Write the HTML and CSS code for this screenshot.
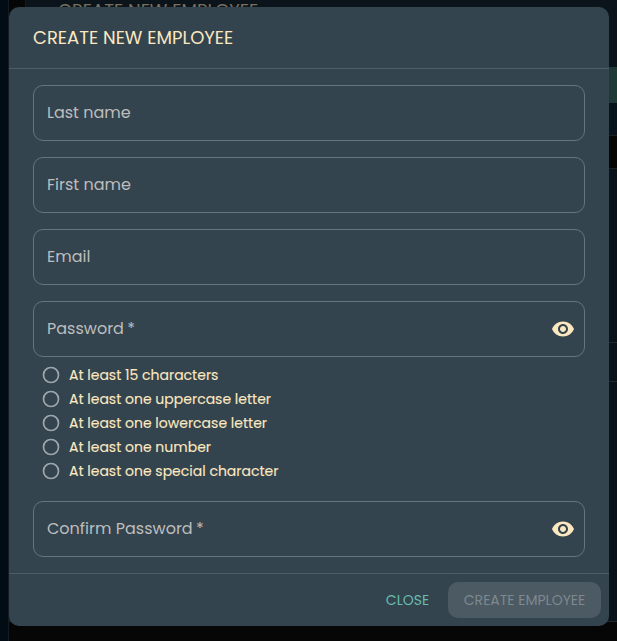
FILE: index.html
```html
<!DOCTYPE html>
<html lang="en">
<head>
<meta charset="utf-8">
<title>Create new employee</title>
<link rel="stylesheet" href="styles.css">
</head>
<body>
<div class="backdrop" aria-hidden="true">
  <div class="rail"></div>
  <div class="page">
    <div class="toolbar"><div class="gutter"></div><div class="heading title-text">CREATE NEW EMPLOYEE</div></div>
    <div class="actions"></div>
    <div class="spacer"></div>
    <div class="table-head"></div>
    <div class="row row-tall"></div>
    <div class="row row-short"></div>
    <div class="row row-last"></div>
  </div>
</div>
<main class="dialog" role="dialog">
  <header class="dialog-header"><h1 class="title-text">CREATE NEW EMPLOYEE</h1></header>
  <form class="content">
    <div class="field"><label>Last name</label></div>
    <div class="field"><label>First name</label></div>
    <div class="field"><label>Email</label></div>
    <div class="field"><label>Password&thinsp;*</label>
      <svg class="eye" viewBox="0 0 24 24"><path d="M12 4.5C7 4.5 2.73 7.61 1 12c1.73 4.39 6 7.5 11 7.5s9.27-3.11 11-7.5c-1.73-4.39-6-7.5-11-7.5M12 17c-2.76 0-5-2.24-5-5s2.24-5 5-5 5 2.24 5 5-2.24 5-5 5m0-8c-1.66 0-3 1.34-3 3s1.34 3 3 3 3-1.34 3-3-1.34-3-3-3"/></svg></div>
    <ul class="rules">
      <li><svg class="ring" viewBox="0 0 24 24"><circle cx="12" cy="12" r="9"/></svg>At least 15 characters</li>
      <li><svg class="ring" viewBox="0 0 24 24"><circle cx="12" cy="12" r="9"/></svg>At least one uppercase letter</li>
      <li><svg class="ring" viewBox="0 0 24 24"><circle cx="12" cy="12" r="9"/></svg>At least one lowercase letter</li>
      <li><svg class="ring" viewBox="0 0 24 24"><circle cx="12" cy="12" r="9"/></svg>At least one number</li>
      <li><svg class="ring" viewBox="0 0 24 24"><circle cx="12" cy="12" r="9"/></svg>At least one special character</li>
    </ul>
    <div class="field"><label>Confirm Password&thinsp;*</label>
      <svg class="eye" viewBox="0 0 24 24"><path d="M12 4.5C7 4.5 2.73 7.61 1 12c1.73 4.39 6 7.5 11 7.5s9.27-3.11 11-7.5c-1.73-4.39-6-7.5-11-7.5M12 17c-2.76 0-5-2.24-5-5s2.24-5 5-5 5 2.24 5 5-2.24 5-5 5m0-8c-1.66 0-3 1.34-3 3s1.34 3 3 3 3-1.34 3-3-1.34-3-3-3"/></svg></div>
  </form>
  <footer class="dialog-footer">
    <button class="button close" type="button">CLOSE</button>
    <button class="button create" type="button" disabled>CREATE EMPLOYEE</button>
  </footer>
</main>
</body>
</html>
```
FILE: styles.css
```css
* { box-sizing: border-box; }
body {
  margin: 0;
  height: 641px;
  overflow: hidden;
  background: #060606;
  color: #fce8c0;
  font-family: Poppins, Inter, sans-serif;
  padding: 7px 8px 0 9px;
}
.backdrop { position: absolute; inset: 0; display: flex; z-index: -1; }
.rail { width: 9px; background: #020c14; border-right: 1px solid #121c22; }
.page { flex: 1; }
.toolbar { height: 67px; display: flex; background: #0b141b; }
.gutter { width: 17px; background: #060606; border-right: 1px solid #171b1e; }
.heading { padding-left: 32px; margin-top: -3px; height: 30px; color: #786f5d; }
.actions { height: 36px; background: #203a38; }
.spacer { height: 33px; background: #08121a; border-bottom: 1px solid #1b2022; }
.table-head { height: 33px; background: #060606; border-bottom: 1px solid #1b2022; }
.row { background: #0a1219; border-bottom: 1px solid #24282a; }
.row-tall { height: 174px; }
.row-short { height: 39px; }
.row-last { height: 240px; }
.dialog {
  width: 600px;
  height: 619px;
  display: flex;
  flex-direction: column;
  background: #34444e;
  border-radius: 10px;
  overflow: hidden;
}
.dialog-header {
  height: 62px;
  padding: 0 24px;
  display: flex;
  align-items: center;
  border-bottom: 1px solid #4b5d66;
}
h1 { margin: 0; }
.title-text { font-size: 18px; font-weight: 400; line-height: 28px; white-space: nowrap; }
.content { padding: 16px 24px; display: flex; flex-direction: column; gap: 16px; }
.field {
  height: 56px;
  flex: none;
  display: flex;
  align-items: center;
  justify-content: space-between;
  padding: 0 9px 0 13px;
  border: 1px solid #64757d;
  border-radius: 10px;
  color: #bdbdbd;
  font-size: 16px;
  line-height: 24px;
  white-space: nowrap;
}
.eye { width: 24px; height: 24px; fill: #fce8c0; }
.rules { list-style: none; margin: -10px 0 2px; padding: 0 0 0 8px; }
.rules li { height: 24px; display: flex; align-items: center; gap: 8px; font-size: 14px; white-space: nowrap; -webkit-text-stroke: 0.1px; }
.ring { width: 20px; height: 20px; fill: none; stroke: #a0a8ad; stroke-width: 2; }
.dialog-footer {
  height: 53px;
  margin-top: auto;
  padding: 8px;
  display: flex;
  justify-content: flex-end;
  gap: 8px;
  border-top: 1px solid #4b5d66;
}
.button { height: 36px; border: 0; border-radius: 10px; padding: 0; font: 400 14px/24px Poppins, Inter, sans-serif; text-align: center; white-space: nowrap; }
.close { width: 64px; padding-right: 1px; background: transparent; color: #67bbb0; }
.create { width: 153px; background: #4c5a63; color: #7e888e; }
```
